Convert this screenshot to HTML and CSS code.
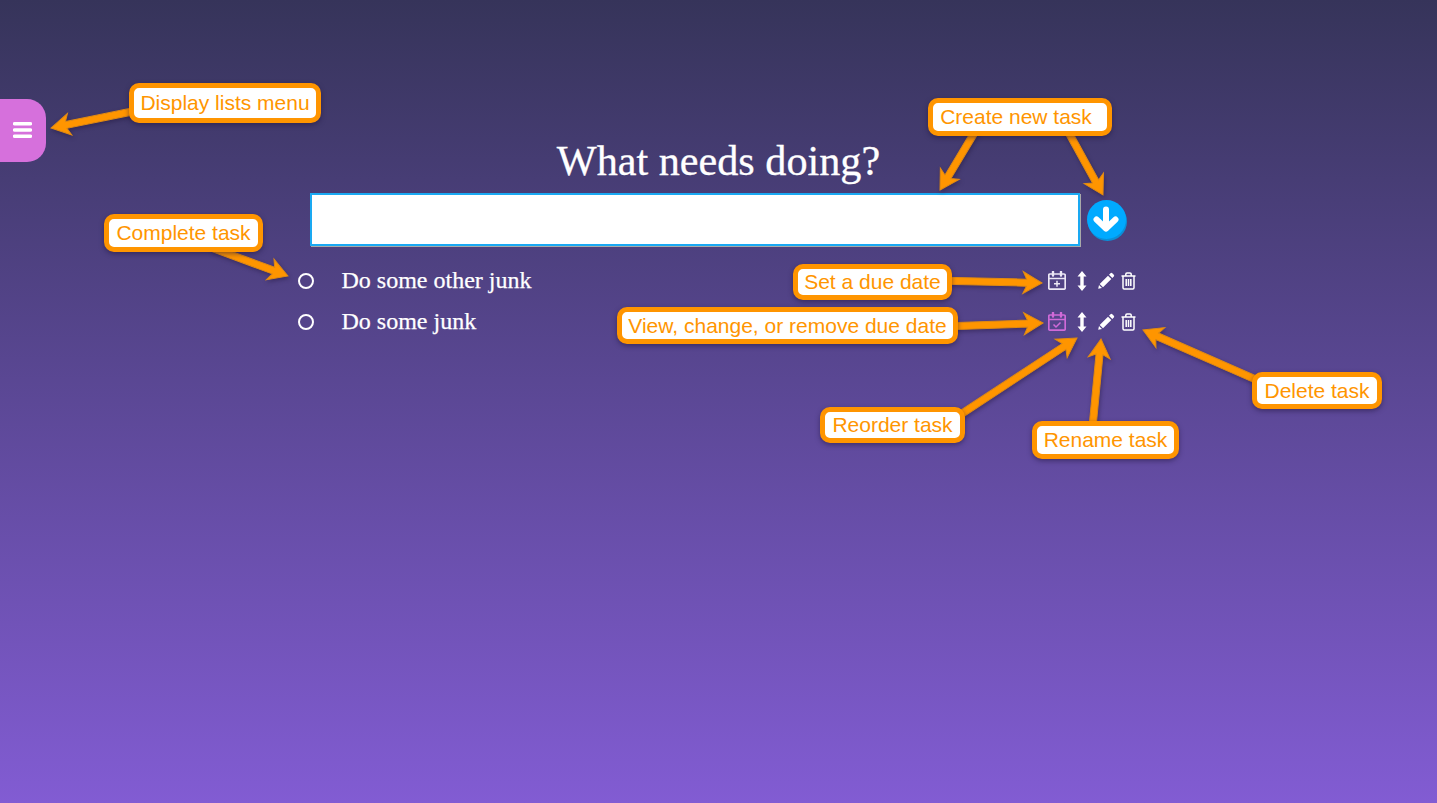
FILE: index.html
```html
<!DOCTYPE html>
<html lang="en">
<head>
<meta charset="utf-8">
<title>What needs doing?</title>
<link rel="stylesheet" href="styles.css">
</head>
<body>
<button class="menu-tab" aria-label="Display lists">
  <svg width="19" height="16" viewBox="0 0 19 16"><path d="M1.500 1.800h16M1.500 8h16M1.500 14.200h16" class="menu-lines"/></svg>
</button>
<main class="app">
  <h1 class="title">What needs doing?</h1>
  <form class="new-task">
    <input class="new-input" type="text" aria-label="New task">
    <button class="add-btn" type="button" aria-label="Create task">
      <svg width="26" height="26" viewBox="0 0 26 26"><path d="M13 3.500V22.500M3.500 13.500l9.500 9 9.500-9" class="add-arrow"/></svg>
    </button>
  </form>
  <ul class="tasks">
    <li class="task">
      <span class="check"></span>
      <span class="task-name">Do some other junk</span>
      <span class="task-actions">
        <svg class="ic ic-cal" viewBox="0 0 18 19"><path d="M2 3h14a1.200 1.200 0 0 1 1.200 1.200V17a1.200 1.200 0 0 1-1.200 1.200H2A1.200 1.200 0 0 1 .8 17V4.200A1.200 1.200 0 0 1 2 3zM.8 7.500h16.400"/><path d="M5 .8v3.700M13 .8v3.700" class="cal-ring"/><path d="M9 9.800v6M6 12.800h6" class="cal-mark"/></svg>
        <svg class="ic ic-move" viewBox="0 0 10 20"><path d="M5 0L9.500 5.500H6.700V14.500H9.500L5 20 .5 14.500H3.300V5.500H.5z"/></svg>
        <svg class="ic ic-pen" viewBox="0 0 17 17"><path d="M12.500 1.200a1.300 1.300 0 0 1 1.800 0l1.500 1.500a1.300 1.300 0 0 1 0 1.800L14.300 6 11 2.700zM10 3.700L13.300 7 5 15.300 1.700 12zM1 13l3 3-3.800.8z"/></svg>
        <svg class="ic ic-bin" viewBox="0 0 15 18"><path d="M.5 4h14M4.800 4V2.200A1.200 1.200 0 0 1 6 1h3a1.200 1.200 0 0 1 1.200 1.200V4M2 4v11.800A1.200 1.200 0 0 0 3.200 17h8.600a1.200 1.200 0 0 0 1.200-1.200V4M5.200 7v7M7.500 7v7M9.800 7v7"/></svg>
      </span>
    </li>
    <li class="task">
      <span class="check"></span>
      <span class="task-name">Do some junk</span>
      <span class="task-actions">
        <svg class="ic ic-cal is-set" viewBox="0 0 18 19"><path d="M2 3h14a1.200 1.200 0 0 1 1.200 1.200V17a1.200 1.200 0 0 1-1.200 1.200H2A1.200 1.200 0 0 1 .8 17V4.200A1.200 1.200 0 0 1 2 3zM.8 7.500h16.400"/><path d="M5 .8v3.700M13 .8v3.700" class="cal-ring"/><path d="M5.500 12.500l2.500 2.500 4.500-4.500" class="cal-mark"/></svg>
        <svg class="ic ic-move" viewBox="0 0 10 20"><path d="M5 0L9.500 5.500H6.700V14.500H9.500L5 20 .5 14.500H3.300V5.500H.5z"/></svg>
        <svg class="ic ic-pen" viewBox="0 0 17 17"><path d="M12.500 1.200a1.300 1.300 0 0 1 1.800 0l1.500 1.500a1.300 1.300 0 0 1 0 1.800L14.300 6 11 2.700zM10 3.700L13.300 7 5 15.300 1.700 12zM1 13l3 3-3.800.8z"/></svg>
        <svg class="ic ic-bin" viewBox="0 0 15 18"><path d="M.5 4h14M4.800 4V2.200A1.200 1.200 0 0 1 6 1h3a1.200 1.200 0 0 1 1.200 1.200V4M2 4v11.800A1.200 1.200 0 0 0 3.200 17h8.600a1.200 1.200 0 0 0 1.200-1.200V4M5.200 7v7M7.500 7v7M9.800 7v7"/></svg>
      </span>
    </li>
  </ul>
</main>
<svg class="arrows" width="1437" height="803" viewBox="0 0 1437 803" aria-hidden="true">
  <path transform="translate(51 128) rotate(168.500)" d="M0 0L-19-11-15.500-3.500H-90V3.500H-15.500L-19 11Z"/>
  <path transform="translate(940 190) rotate(121)" d="M0 0L-19-11-15.500-3.500H-72V3.500H-15.500L-19 11Z"/>
  <path transform="translate(1103 195) rotate(61.200)" d="M0 0L-19-11-15.500-3.500H-76V3.500H-15.500L-19 11Z"/>
  <path transform="translate(288 276) rotate(20.300)" d="M0 0L-19-11-15.500-3.500H-80V3.500H-15.500L-19 11Z"/>
  <path transform="translate(1042 283) rotate(1.300)" d="M0 0L-19-11-15.500-3.500H-98V3.500H-15.500L-19 11Z"/>
  <path transform="translate(1043 323) rotate(-2)" d="M0 0L-19-11-15.500-3.500H-93V3.500H-15.500L-19 11Z"/>
  <path transform="translate(1077 338) rotate(-33.300)" d="M0 0L-19-11-15.500-3.500H-150V3.500H-15.500L-19 11Z"/>
  <path transform="translate(1101 339) rotate(-84.500)" d="M0 0L-19-11-15.500-3.500H-92V3.500H-15.500L-19 11Z"/>
  <path transform="translate(1143 330) rotate(203.700)" d="M0 0L-19-11-15.500-3.500H-133V3.500H-15.500L-19 11Z"/>
</svg>
<span class="note note-menu">Display lists menu</span>
<span class="note note-create">Create new task</span>
<span class="note note-complete">Complete task</span>
<span class="note note-set">Set a due date</span>
<span class="note note-view">View, change, or remove due date</span>
<span class="note note-reorder">Reorder task</span>
<span class="note note-rename">Rename task</span>
<span class="note note-delete">Delete task</span>
</body>
</html>
```

FILE: styles.css
```css
* { box-sizing: border-box; }
html, body { height: 100%; }
body {
  margin: 0;
  position: relative;
  overflow: hidden;
  background: linear-gradient(180deg, #36345a 0%, #825cd3 100%);
  font-family: "Liberation Serif", serif;
  color: #fff;
}
.menu-tab {
  position: absolute;
  left: 0;
  top: 99px;
  width: 46px;
  height: 63px;
  padding: 0 1px 2px 0;
  border: 0;
  border-radius: 0 19px 19px 0;
  background: #d670dc;
  display: flex;
  align-items: center;
  justify-content: center;
}
.menu-lines { stroke: #fff; stroke-width: 3.400; stroke-linecap: round; fill: none; }
.app {
  width: 846px;
  margin: 0 auto;
  padding-top: 134px;
}
.title {
  margin: 0 0 4px;
  height: 55px;
  font-size: 42.200px;
  line-height: 53px;
  font-weight: 400;
  text-align: center;
  -webkit-text-stroke: .3px #fff;
}
.new-task {
  display: flex;
  align-items: center;
  gap: 7px;
  padding-left: 14px;
}
.new-input {
  width: 770px;
  height: 53px;
  border: 2px solid #1aa9f2;
  background: #fff;
  box-shadow: 1px 1px 0 #a9a9a9;
  outline: 0;
}
.add-btn {
  width: 39px;
  height: 39px;
  margin-bottom: 1px;
  padding: 0;
  border: 0;
  border-radius: 50%;
  background: #00aaff;
  box-shadow: 1px 2px 0 #0a8fd8;
  display: flex;
  align-items: center;
  justify-content: center;
}
.add-arrow { stroke: #fff; stroke-width: 6; stroke-linecap: round; stroke-linejoin: round; fill: none; }
.tasks {
  list-style: none;
  margin: 14px 0 0;
  padding: 0;
}
.task {
  display: flex;
  align-items: center;
  height: 41px;
  padding-left: 2px;
}
.check {
  width: 16px;
  height: 16px;
  border: 2.500px solid #fff;
  border-radius: 50%;
  flex: none;
}
.task-name {
  margin-left: 28px;
  font-size: 24px;
  flex: 1;
  -webkit-text-stroke: .25px #fff;
}
.task-actions {
  display: flex;
  align-items: center;
  margin-right: 6px;
}
.ic { display: block; flex: none; }
.ic-cal { width: 18px; height: 19px; fill: none; stroke: #ece7f5; stroke-width: 1.700; }
.ic-cal .cal-ring { stroke-width: 2.400; stroke-linecap: round; }
.ic-cal .cal-mark { stroke-width: 1.500; }
.ic-cal.is-set { stroke: #cf6ad8; }
.ic-move { width: 10px; height: 20px; margin-left: 11px; fill: #fff; }
.ic-pen { width: 17px; height: 17px; margin-left: 11px; fill: #fff; }
.ic-bin { width: 15px; height: 18px; margin-left: 6px; fill: none; stroke: #fff; stroke-width: 1.500; }
.arrows {
  position: absolute;
  left: 0;
  top: 0;
  pointer-events: none;
  fill: #ff9500;
  stroke: #e08a12;
  stroke-width: 1;
  filter: drop-shadow(1px 2px 2px rgba(30, 20, 60, .45));
}
.note {
  position: absolute;
  display: flex;
  align-items: center;
  justify-content: center;
  border: 5px solid #ff9500;
  border-radius: 10px;
  background: #fff;
  box-shadow: 0 2px 5px rgba(30, 20, 60, .5);
  color: #ff9500;
  font-family: "Liberation Sans", Arial, sans-serif;
  font-size: 21px;
  white-space: nowrap;
}
.note-menu { left: 129px; top: 83px; width: 192px; height: 40px; }
.note-create { left: 928px; top: 98px; width: 184px; height: 38px; padding-right: 8px; }
.note-complete { left: 104px; top: 214px; width: 159px; height: 38px; }
.note-set { left: 793px; top: 264px; width: 159px; height: 36px; }
.note-view { left: 617px; top: 307px; width: 341px; height: 37px; }
.note-reorder { left: 820px; top: 407px; width: 145px; height: 36px; }
.note-rename { left: 1032px; top: 421px; width: 147px; height: 38px; }
.note-delete { left: 1252px; top: 372px; width: 130px; height: 37px; }
```
